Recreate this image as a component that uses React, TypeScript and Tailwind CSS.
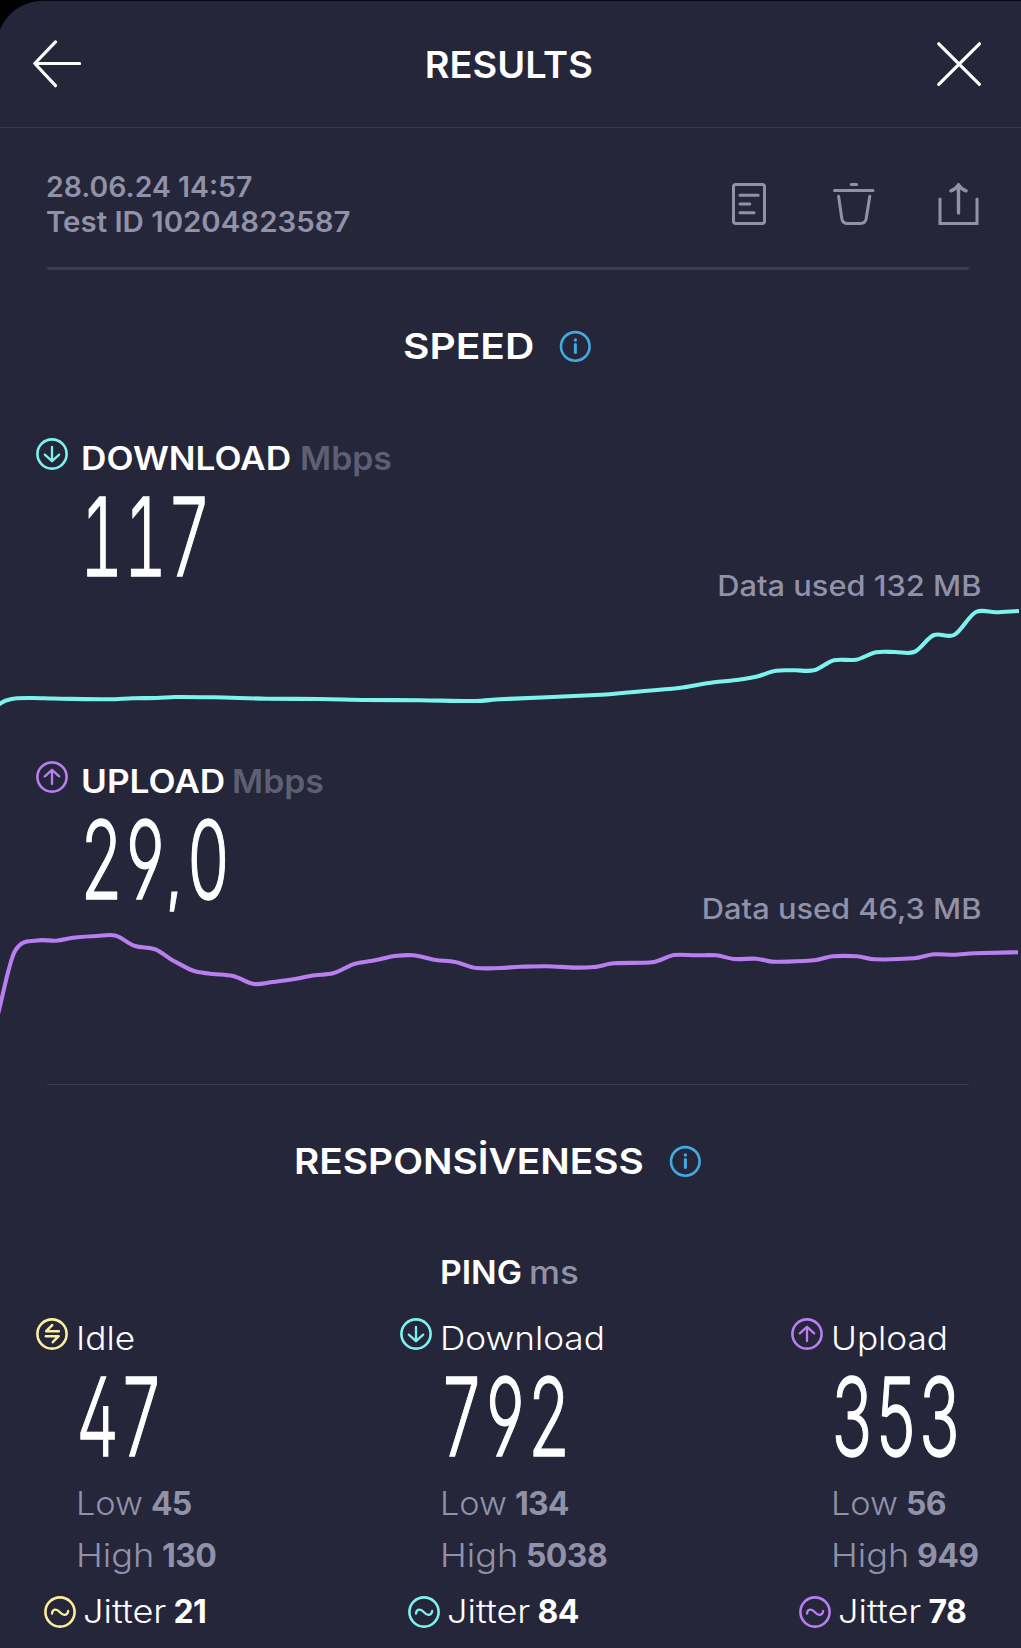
import React from 'react';
import clsx from 'clsx';

type Point = [number, number];

const TEAL = 'text-[#7cf3ee]';
const PURPLE = 'text-[#b97ef0]';
const YELLOW = 'text-[#fbee9c]';

const downloadPoints: Point[] = [
  [-4, 107], [6, 101.5], [17, 99.3], [33, 99], [53, 99.5], [110, 100.3], [133, 99.3], [157, 99], [175, 98],
  [213, 98.3], [267, 99.7], [320, 100], [367, 101], [420, 101.2], [475, 102], [500, 100.3], [547, 98.3],
  [601, 95.7], [648, 91.7], [679, 89], [714, 83.3], [734, 81.3], [756, 77.7], [776, 71.7], [795, 71.3],
  [814, 71.3], [834, 61.3], [856, 60.7], [876, 53.3], [895, 53], [914, 53], [934, 36], [954, 36],
  [976, 13], [996, 13.3], [1019, 12],
];

const uploadPoints: Point[] = [
  [-5, 103], [15, 29], [37, 18.5], [56, 18.7], [75, 15.5], [97, 14], [115, 13.5], [135, 24], [155, 27.3],
  [175, 39.7], [195, 49.3], [213, 52], [233, 54], [254, 62], [273, 60], [293, 57.3], [315, 53.3],
  [333, 51.3], [355, 41.7], [375, 38.3], [395, 34], [413, 33.3], [436, 38], [455, 40], [476, 46],
  [500, 46], [520, 44.8], [547, 44.2], [575, 45.6], [594, 45], [614, 41.3], [654, 40], [674, 33], [695, 33.3],
  [716, 33.3], [734, 37], [756, 36.7], [774, 39.7], [814, 38.3], [833, 34.3], [857, 34.3], [874, 37.3],
  [914, 36.3], [934, 32.3], [954, 32.7], [974, 31.3], [1018, 30.3],
];

function smoothPath(points: Point[]) {
  let d = `M${points[0][0]} ${points[0][1]}`;
  for (let i = 0; i < points.length - 1; i++) {
    const p0 = points[Math.max(i - 1, 0)];
    const p1 = points[i];
    const p2 = points[i + 1];
    const p3 = points[Math.min(i + 2, points.length - 1)];
    // limit the tangents to the segment length so flat parts stay flat
    const dx = (p2[0] - p1[0]) / 3;
    const s1 = (p2[1] - p0[1]) / (p2[0] - p0[0]);
    const s2 = (p3[1] - p1[1]) / (p3[0] - p1[0]);
    d += ` C${p1[0] + dx} ${p1[1] + s1 * dx * 0.85} ${p2[0] - dx} ${p2[1] - s2 * dx * 0.85} ${p2[0]} ${p2[1]}`;
  }
  return d;
}

function CircleIcon({ color, children }: { color: string; children: React.ReactNode }) {
  return (
    <svg
      viewBox="0 0 32 32"
      className={clsx('h-8 w-8 shrink-0', color)}
      fill="none"
      stroke="currentColor"
      strokeWidth="2.6"
      strokeLinecap="round"
      strokeLinejoin="round"
    >
      <circle cx="16" cy="16" r="14.6" />
      {children}
    </svg>
  );
}

const DownIcon = () => (
  <CircleIcon color={TEAL}>
    <path d="M16 9v14M8.8 16.6l7.2 6.6 7.2-6.6" strokeWidth="2.3" />
  </CircleIcon>
);

const UpIcon = () => (
  <CircleIcon color={PURPLE}>
    <path d="M16 23V9M8.8 15.4L16 8.8l7.2 6.6" strokeWidth="2.3" />
  </CircleIcon>
);

const IdleIcon = () => (
  <CircleIcon color={YELLOW}>
    <path d="M22.8 13.2H10.2l6-6M9.8 18.2h12.8l-5.8 6" strokeWidth="2.6" />
  </CircleIcon>
);

const JitterIcon = ({ color }: { color: string }) => (
  <CircleIcon color={color}>
    <path d="M8 17.6c.2-2.6 1.8-4 3.7-4 3.6 0 4.9 5.2 8.6 5.2 2.1 0 3.6-1.4 3.9-4" strokeWidth="2.3" />
  </CircleIcon>
);

function InfoIcon() {
  return (
    <svg viewBox="0 0 32 32" className="h-8 w-8 text-[#43a9e2]" fill="none" stroke="currentColor">
      <circle cx="16.3" cy="16.4" r="14.3" strokeWidth="2.6" />
      <path d="M16.4 14.6v8" strokeWidth="3" strokeLinecap="round" />
      <circle cx="16.4" cy="10" r="1.7" fill="currentColor" stroke="none" />
    </svg>
  );
}

function Header() {
  return (
    <header className="flex h-[128px] items-center justify-between border-b border-[#3a3a50] pl-[33px] pr-10">
      <svg viewBox="0 0 48 48" className="h-12 w-12" fill="none" stroke="white" strokeWidth="3.2" strokeLinecap="round" strokeLinejoin="round">
        <path d="M46.5 23.5H2M22.5 1.9L1.8 23.5 22.5 45.7" />
      </svg>
      <h1 className="scale-x-[1.04] pt-0.5 text-[36.5px] font-semibold leading-10">RESULTS</h1>
      <svg viewBox="0 0 44 44" className="h-11 w-11" fill="none" stroke="white" strokeWidth="3.2" strokeLinecap="round">
        <path d="M1.8 1.8l40.6 40.6M42.4 1.8L1.8 42.4" />
      </svg>
    </header>
  );
}

function TestInfo() {
  return (
    <section className="ml-[47px] mr-[41px] flex h-[139px] items-start justify-between text-[#9192a9]">
      <div className="-ml-px pt-[42px] text-[28px] font-semibold leading-[35px]">
        <p className="origin-left scale-x-[1.015]">28.06.24 14:57</p>
        <p className="origin-left scale-x-[1.05]">Test ID 10204823587</p>
      </div>
      <div className="flex gap-[67px] pt-[55px]">
        <svg viewBox="0 0 34 42" className="h-[42px] w-[34px]" fill="none" stroke="currentColor" strokeWidth="3" strokeLinecap="round">
          <rect x="1.5" y="1.5" width="31" height="39" rx="2.2" />
          <path d="M8 12.2h18.2M8 21h9.8M8 29.8h14" />
        </svg>
        <svg viewBox="0 0 42 42" className="h-[42px] w-[42px]" fill="none" stroke="currentColor" strokeWidth="3" strokeLinecap="round">
          <path d="M18.2 1.5h5.4M1.5 7.4h38.5M5.6 13.2l3.2 22.3q.8 5 5.8 5h12.8q5 0 5.8-5L36.8 13.2" />
        </svg>
        <svg viewBox="0 0 42 42" className="-ml-1 h-[42px] w-[42px]" fill="none" stroke="currentColor" strokeWidth="3" strokeLinecap="round">
          <path d="M2 16v24.5h37V16" />
          <path d="M20.5 30V2.5M13 7.8q5-2 7.5-6 2.5 4 7.5 6" strokeWidth="3.4" />
        </svg>
      </div>
    </section>
  );
}

function Reading({ value, className }: { value: string; className?: string }) {
  const [whole, decimals] = value.split(',');
  return (
    <p
      className={clsx(
        'mt-[22px] h-[73px] origin-left scale-x-[0.615] whitespace-nowrap text-[108.5px] font-light leading-[73px] tracking-[1px] [-webkit-text-stroke:1.4px_white]',
        // slab ones, but no slashed zero
        value === '117'
          ? "[font-feature-settings:'tnum','ss02','cv02','cv04']"
          : "[font-feature-settings:'tnum','cv02','cv04']",
        className
      )}
    >
      {whole}
      {decimals && (
        <>
          <span className="inline-block w-[31px] pl-0.5 text-[64px] font-semibold leading-none">,</span>
          {decimals}
        </>
      )}
    </p>
  );
}

interface SpeedProps {
  icon: React.ReactNode;
  label: string;
  labelWidth: string;
  value: string;
  used: string;
  points: Point[];
  color: string;
}

function SpeedBlock({ icon, label, labelWidth, value, used, points, color }: SpeedProps) {
  return (
    <div className="h-[323px]">
      <div className="flex h-10 pl-9 text-[32px] font-semibold leading-[42px]">
        {icon}
        <span className={clsx('ml-[13px] shrink-0', labelWidth)}>
          <span className="inline-block origin-left scale-x-110">{label}</span>
        </span>
        <span className="origin-left scale-x-[1.055] text-[#5f5f73]">Mbps</span>
      </div>
      <Reading value={value} className="ml-20" />
      <p className="origin-right scale-x-[1.1] pr-[36px] text-right text-[28px] font-medium leading-[26px] text-[#9192a9]">
        {used}
      </p>
      <svg viewBox="0 0 1021 162" className={clsx('block h-[162px] w-full', color)} fill="none" stroke="currentColor" strokeWidth="4.1">
        <path d={smoothPath(points)} />
      </svg>
    </div>
  );
}

interface PingProps {
  icon: React.ReactNode;
  color: string;
  label: string;
  value: string;
  low: string;
  high: string;
  jitter: string;
}

function PingColumn({ icon, color, label, value, low, high, jitter }: PingProps) {
  return (
    <div className="text-[32px] font-light">
      <div className="flex h-10 gap-2 leading-[42px]">
        {icon}
        <span className="origin-left scale-x-[1.1]">{label}</span>
      </div>
      <Reading value={value} className="ml-[39.5px]" />
      <div className="mt-[25px] pl-10 leading-[52px] text-[#9192a9]">
        <div className="flex">
          <span className="w-[75px]">
            <span className="inline-block origin-left scale-x-[1.07]">Low</span>
          </span>
          <b className="font-bold tracking-[-0.8px]">{low}</b>
        </div>
        <div className="flex">
          <span className="w-[86px]">
            <span className="inline-block origin-left scale-x-[1.13]">High</span>
          </span>
          <b className="font-bold tracking-[-0.6px]">{high}</b>
        </div>
      </div>
      <div className="flex items-center pl-2 leading-[60px]">
        <JitterIcon color={color} />
        <span className="ml-[6.5px] w-[91px]">
          <span className="inline-block origin-left scale-x-[1.13]">Jitter</span>
        </span>
        <b className="font-bold tracking-[-0.6px]">{jitter}</b>
      </div>
    </div>
  );
}

export default function App() {
  return (
    <div className="relative isolate h-[1648px] w-[1021px] overflow-hidden bg-black font-['Inter',sans-serif] text-white">
      <div className="absolute left-10 right-0 top-0 -z-10 h-px bg-[#07071c]" />
      <div className="absolute -left-[3px] bottom-0 right-0 top-px -z-10 rounded-tl-[45px] bg-[#252639]" />

      <Header />
      <TestInfo />
      <div className="ml-[47px] mr-[52px] h-[3px] rounded-full bg-[#3a3a50]" />

      <div className="mt-14 flex h-10 items-center pl-[403px]">
        <h2 className="w-[156px] text-[36px] font-semibold leading-10">
          <span className="inline-block origin-left scale-x-[1.13]">SPEED</span>
        </h2>
        <InfoIcon />
      </div>

      <div className="mt-[72px]">
        <SpeedBlock
          icon={<DownIcon />}
          label="DOWNLOAD"
          labelWidth="w-[219px]"
          value="117"
          used="Data used 132 MB"
          points={downloadPoints}
          color={TEAL}
        />
        <SpeedBlock
          icon={<UpIcon />}
          label="UPLOAD"
          labelWidth="w-[151px]"
          value="29,0"
          used="Data used 46,3 MB"
          points={uploadPoints}
          color={PURPLE}
        />
      </div>
      <div className="ml-[47px] mr-[52px] h-px bg-[#3a3a50]" />

      <div className="mt-14 flex h-10 items-center pl-[294px]">
        <h2 className="w-[375px] text-[36px] font-semibold leading-10">
          <span className="inline-block origin-left scale-x-[1.079]">RESPONSİVENESS</span>
        </h2>
        <InfoIcon />
      </div>

      <div className="mt-[71px] flex h-10 pl-[439.5px] text-[32px] font-semibold leading-[42px]">
        <span className="w-[89px]">
          <span className="inline-block origin-left scale-x-[1.055]">PING</span>
        </span>
        <span className="origin-left scale-x-[1.09] font-medium text-[#9192a9]">ms</span>
      </div>

      <div className="mt-[26px] grid grid-cols-[364px_391px_1fr] pl-9">
        <PingColumn icon={<IdleIcon />} color={YELLOW} label="Idle" value="47" low="45" high="130" jitter="21" />
        <PingColumn icon={<DownIcon />} color={TEAL} label="Download" value="792" low="134" high="5038" jitter="84" />
        <PingColumn icon={<UpIcon />} color={PURPLE} label="Upload" value="353" low="56" high="949" jitter="78" />
      </div>
    </div>
  );
}
